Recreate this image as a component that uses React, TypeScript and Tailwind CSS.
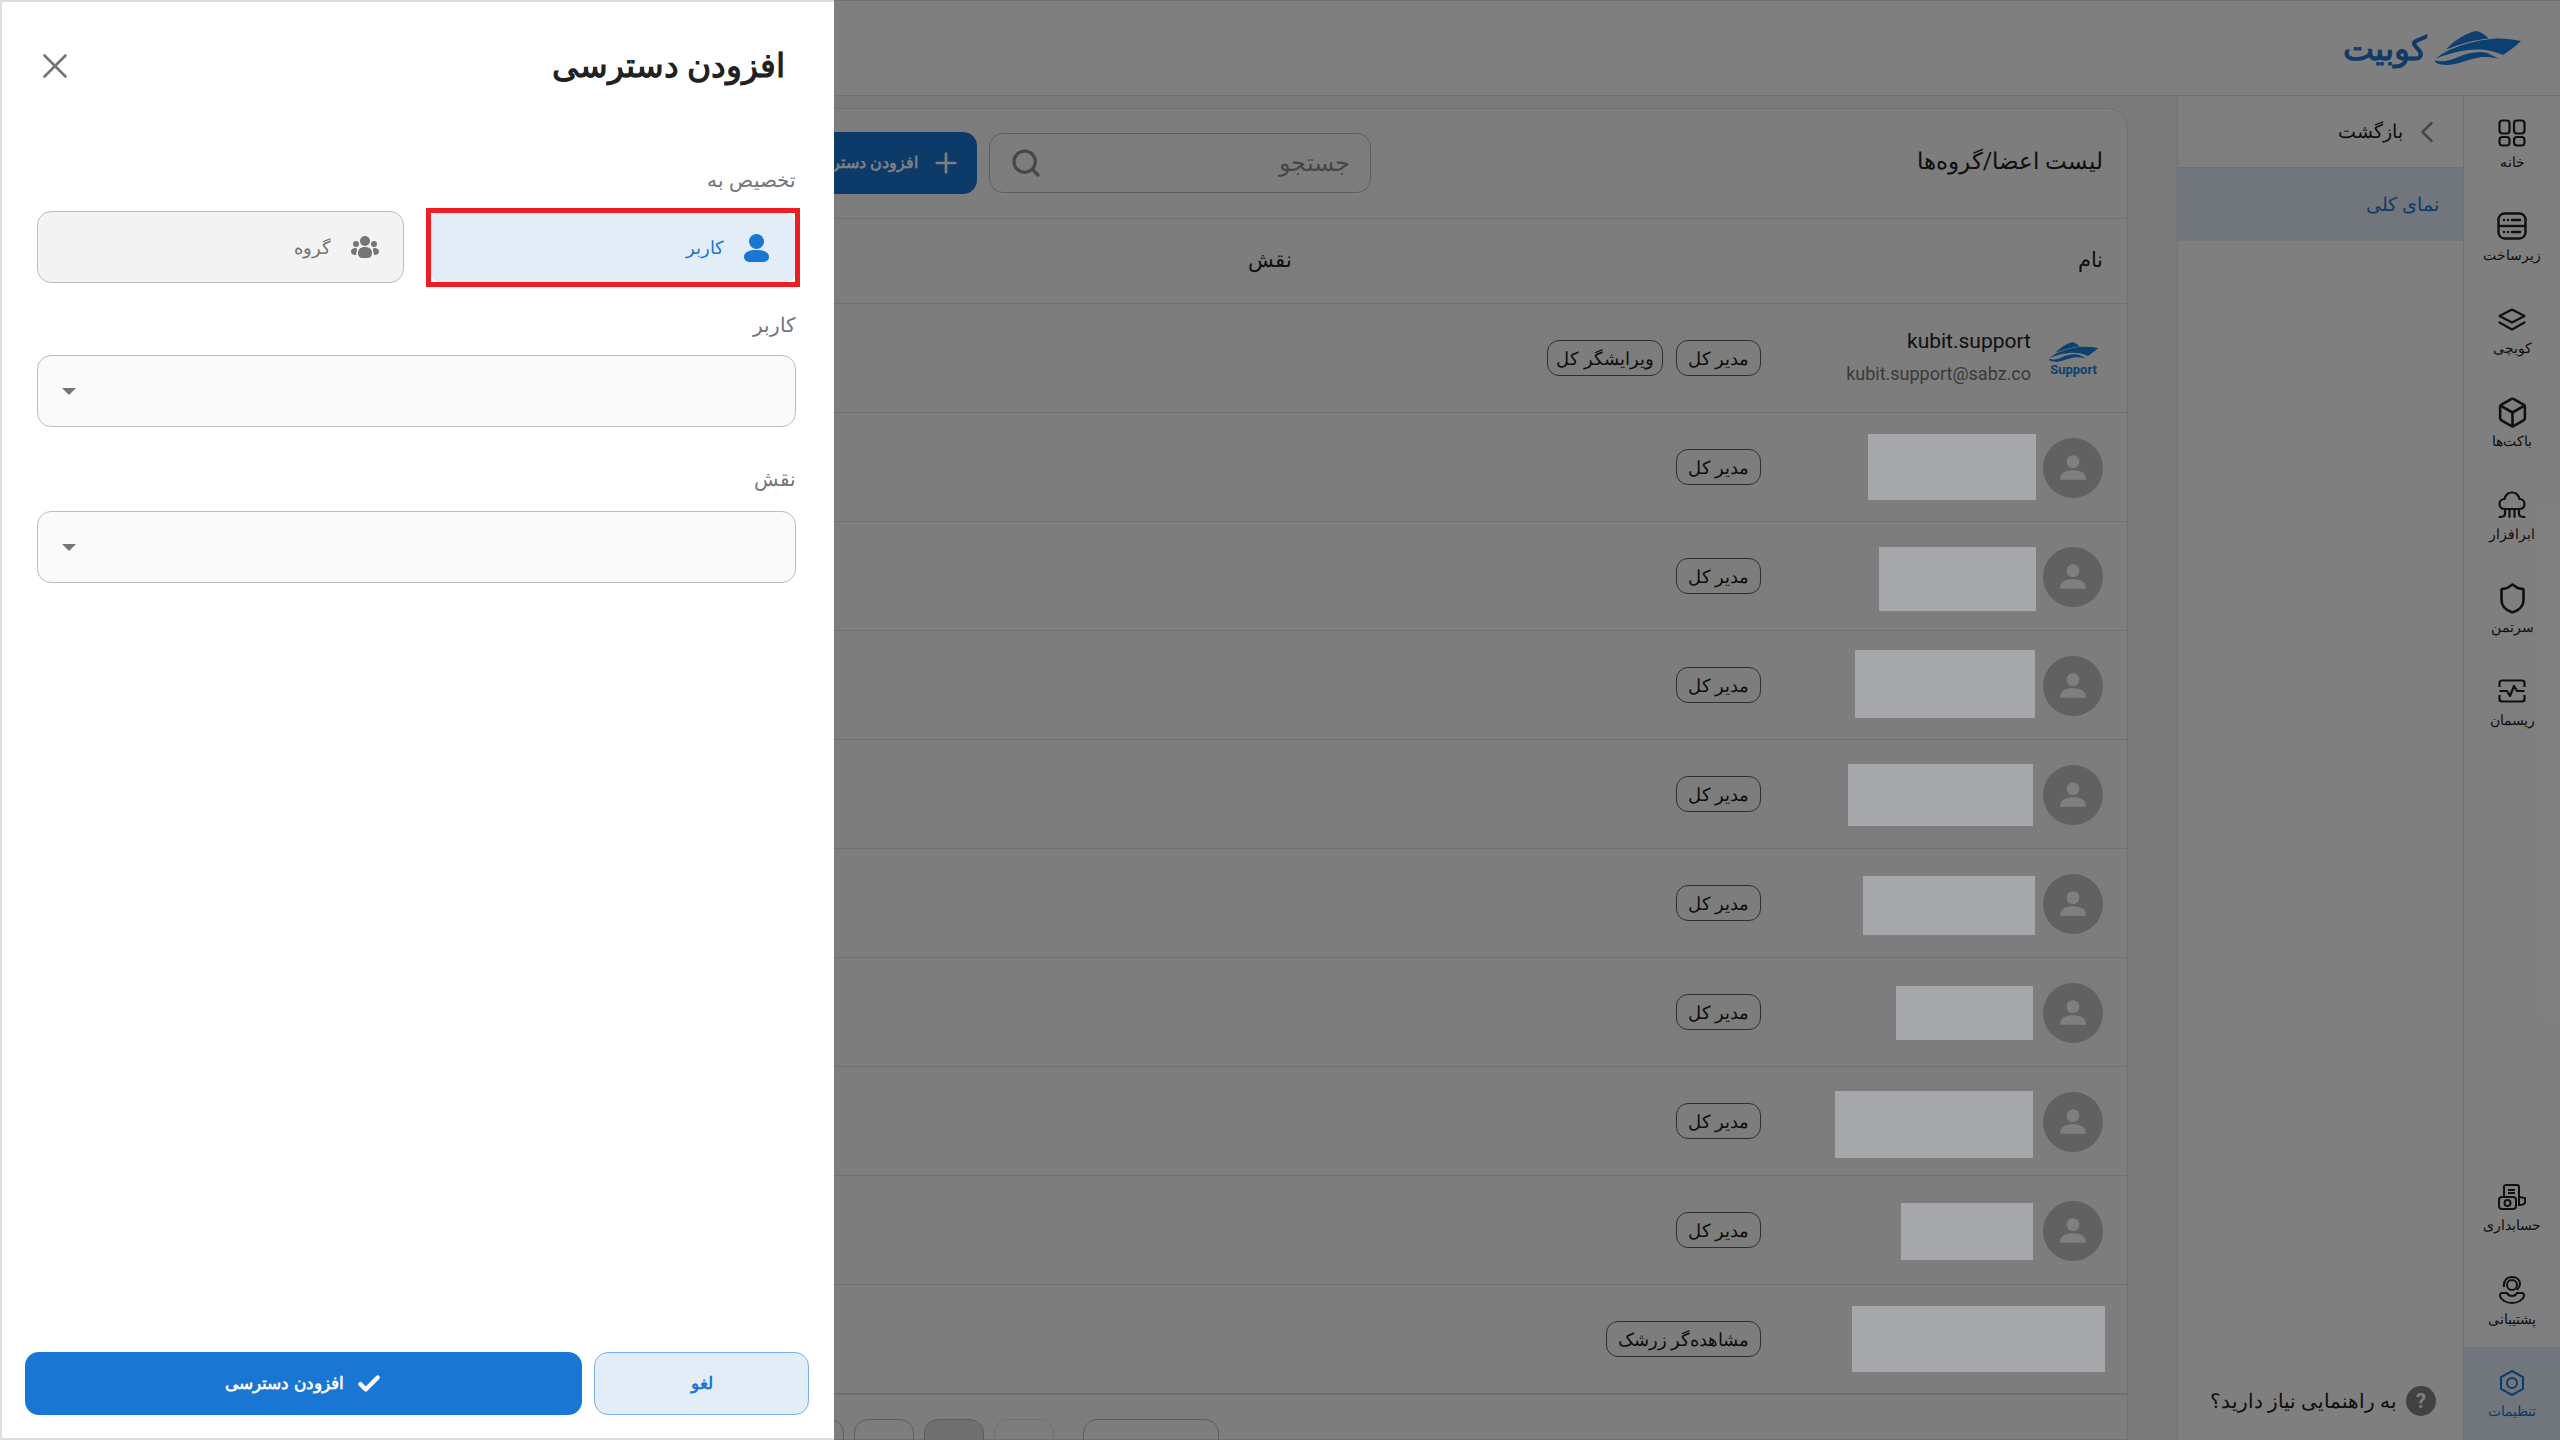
import React from "react";
import { Box, Shield, Search, Plus, ChevronLeft, X, Check } from "lucide-react";

const Boat = ({ className }: { className?: string }) => (
  <svg viewBox="0 0 86 34" className={className} fill="currentColor">
    <path d="M11 18.5 C18 11 24 7 28 5 C32 3 36 1 40 0 C45 0 49 3 54 7.5 C40 8.5 24 13.5 11 18.5 Z" />
    <path d="M1 27.5 C10 19.5 30 11 56 8 C66 7 76 8 86 10 C81 15 74 20 68 24 C60 20.5 52 18.5 42 18.5 C28 18.5 12 23 1 27.5 Z" />
    <path d="M0 29.5 C8 31 14 30 22 26.5 C32 22 44 19.5 52 22 C56 23.5 60 25.5 64 28 C56 26 50 25.5 44 26.5 C32 28.5 22 34 12 34 C6 34 2 33 0 31 Z" />
  </svg>
);

const railTop = [
  {
    label: "خانه",
    icon: (
      <svg viewBox="0 0 28 28" className="w-[28px] h-[28px]" fill="none" stroke="currentColor" strokeWidth="2.2">
        <rect x="1.5" y="1.5" width="10" height="13" rx="3" />
        <rect x="16" y="1.5" width="10.5" height="13" rx="3" />
        <rect x="1.5" y="18" width="10" height="8.5" rx="3" />
        <rect x="16" y="18" width="10.5" height="8.5" rx="3" />
      </svg>
    ),
  },
  {
    label: "زیرساخت",
    icon: (
      <svg viewBox="0 0 30 28" className="w-[30px] h-[28px]" fill="none" stroke="currentColor" strokeWidth="2.4">
        <rect x="1.5" y="1.5" width="27" height="25" rx="6" />
        <path d="M1.5 14h27" />
        <path d="M7 8h.1M11 8h.1M15 8h8M7 20h.1M11 20h.1M15 20h8" strokeLinecap="round" />
      </svg>
    ),
  },
  {
    label: "کوبچی",
    icon: (
      <svg viewBox="0 0 28 23" className="w-[28px] h-[23px]" fill="none" stroke="currentColor" strokeWidth="2.2" strokeLinejoin="round" strokeLinecap="round">
        <path d="M14 1.5 L26.5 8 L14 14.5 L1.5 8 Z" />
        <path d="M1.5 14.5 L14 21.5 L26.5 14.5" />
      </svg>
    ),
  },
  { label: "باکت‌ها", icon: <Box size={33} strokeWidth={1.9} /> },
  {
    label: "ابرافزار",
    icon: (
      <svg viewBox="0 0 28 28" className="w-[28px] h-[28px]" fill="none" stroke="currentColor" strokeWidth="2.2" strokeLinecap="round">
        <path d="M7 18 C3 18 1.5 15.5 1.5 13 C1.5 10 4 8 6.5 8 C7.5 4 10.5 1.5 14 1.5 C18 1.5 20.5 4 21.5 8 C24.5 8 26.5 10.5 26.5 13 C26.5 16 24.5 18 21 18 Z" />
        <path d="M7 18 V23 C7 25.5 5 26 1.5 26 M21 18 V23 C21 25.5 23 26 26.5 26 M11.5 18 V26 M16.5 18 V26" />
      </svg>
    ),
  },
  { label: "سرتمن", icon: <Shield size={33} strokeWidth={1.9} /> },
  {
    label: "ریسمان",
    icon: (
      <svg viewBox="0 0 28 24" className="w-[28px] h-[24px]" fill="none" stroke="currentColor" strokeWidth="2.2" strokeLinejoin="round">
        <path d="M1.5 8 V4 C1.5 2.5 2.5 1.5 4 1.5 H24 C25.5 1.5 26.5 2.5 26.5 4 V8" />
        <path d="M1.5 16 V20 C1.5 21.5 2.5 22.5 4 22.5 H24 C25.5 22.5 26.5 21.5 26.5 20 V16" />
        <path d="M1.5 12 H9 L12 17 L16 7 L19 12 H26.5" />
      </svg>
    ),
  },
];

const rows = [
  { w: 168, h: 66, o: -1, right: 7 },
  { w: 157, h: 64, o: 2, right: 7 },
  { w: 180, h: 68, o: -2, right: 8 },
  { w: 185, h: 62, o: 0, right: 10 },
  { w: 172, h: 59, o: 1, right: 8 },
  { w: 137, h: 54, o: 0, right: 10 },
  { w: 198, h: 67, o: 2, right: 10 },
  { w: 132, h: 57, o: 0, right: 10 },
];

const Chip = ({ children, className = "px-[11px]" }: { children: React.ReactNode; className?: string }) => (
  <span className={`h-[36px] flex items-center border border-[#5f5f5f] rounded-[12px] text-[18px] text-[#1a1a1a] whitespace-nowrap ${className}`}>
    {children}
  </span>
);

const Avatar = () => (
  <div className="w-[60px] h-[60px] rounded-full bg-[#c2c2c2] flex items-center justify-center shrink-0">
    <svg viewBox="0 0 30 30" className="w-[32px] h-[32px]" fill="#ffffff">
      <circle cx="15" cy="9" r="6" />
      <path d="M3 25 C3 19 9 17 15 17 C21 17 27 19 27 25 V26 H3 Z" />
    </svg>
  </div>
);

export default function App() {
  return (
    <div dir="rtl" className="relative h-screen w-full overflow-hidden bg-white flex flex-col text-[#212121] font-['Roboto','Noto_Sans',sans-serif]">
      <header className="h-[96px] shrink-0 border-b border-t border-t-[#dedede] border-b-[#e0e0e0] flex items-center pr-[39px] gap-[8px]">
        <Boat className="w-[86px] h-[34px] text-[#1b7fe0]" />
        <span className="text-[33px] font-bold text-[#1e76d0] leading-none">کوبیت</span>
      </header>
      <div className="flex-1 min-h-0 flex">
        <aside className="w-[97px] shrink-0 border-l border-[#e0e0e0] flex flex-col justify-between">
          <div className="flex flex-col pt-[2px]">
            {railTop.map((it) => (
              <div key={it.label} className="h-[93px] flex flex-col items-center justify-center gap-[5px] text-[#212121]">
                <div className="h-[30px] flex items-center">{it.icon}</div>
                <span className="text-[14px] leading-[18px]">{it.label}</span>
              </div>
            ))}
          </div>
          <div className="flex flex-col">
            <div className="h-[93px] pt-[3px] flex flex-col items-center justify-center gap-[6px]">
              <svg viewBox="0 0 28 26" className="w-[28px] h-[26px]" fill="none" stroke="currentColor" strokeWidth="2">
                <path d="M6 13 V3 C6 2 7 1 8 1 H19 C20 1 21 2 21 3 V22" />
                <path d="M10 6h7M10 9h7M21 13 L27 14 V18 C27 20 25 21 21 21" />
                <rect x="1" y="13" width="17" height="12" rx="3" />
                <circle cx="9.5" cy="19" r="3" />
              </svg>
              <span className="text-[14px] leading-[18px]">حسابداری</span>
            </div>
            <div className="h-[93px] pt-[3px] flex flex-col items-center justify-center gap-[6px]">
              <svg viewBox="0 0 26 28" className="w-[26px] h-[28px]" fill="none" stroke="currentColor" strokeWidth="2">
                <circle cx="13" cy="9" r="5" />
                <path d="M5 11 C4 5 8 1 13 1 C18 1 21 4 21 8 C21 10 20 12 18 14" />
                <path d="M8 17 H3 C1 17 1 19 1 20 C2 24 7 27 13 27 C19 27 24 24 25 20 C25 19 25 17 23 17 H18 C17 19 15 20 13 20 C11 20 9 19 8 17 Z" />
              </svg>
              <span className="text-[14px] leading-[18px]">پشتیبانی</span>
            </div>
            <div className="h-[93px] pt-[3px] flex flex-col items-center justify-center gap-[6px] bg-[#e3edf8] text-[#1976d2]">
              <svg viewBox="0 0 24 26" className="w-[24px] h-[26px]" fill="none" stroke="currentColor" strokeWidth="2">
                <path d="M12 1 L23 7 V19 L12 25 L1 19 V7 Z" />
                <circle cx="12" cy="13" r="5" />
              </svg>
              <span className="text-[14px] leading-[18px]">تنظیمات</span>
            </div>
          </div>
        </aside>
        <nav className="w-[286px] shrink-0 border-l border-[#e0e0e0] flex flex-col">
          <div className="h-[72px] border-b border-[#e0e0e0] flex items-center pr-[18px] gap-[6px]">
            <ChevronLeft size={36} strokeWidth={1.7} className="text-[#8e8e8e]" />
            <span className="text-[19px] pt-[2px]">بازگشت</span>
          </div>
          <div className="h-[73px] bg-[#e3edf8] flex items-center pr-[24px] pt-[2px] text-[19px] text-[#1976d2]">نمای کلی</div>
          <div className="mt-auto h-[54px] flex items-start pr-[27px] gap-[9px]">
            <div className="w-[30px] h-[30px] rounded-full bg-[#848484] text-white font-bold text-[20px] flex items-center justify-center">?</div>
            <span className="text-[20px] leading-[30px]">به راهنمایی نیاز دارید؟</span>
          </div>
        </nav>
        <main className="flex-1 min-w-0 bg-[#f5f5f5] pt-[12px] pr-[49px] pl-[732px]">
          <section className="border border-[#e0e0e0] rounded-t-[20px] bg-[#fafafa] h-full flex flex-col">
            <div className="h-[110px] shrink-0 border-b border-[#e0e0e0] flex items-center justify-between pr-[24px] pb-[2px]">
              <h2 className="text-[23px]">لیست اعضا/گروه‌ها</h2>
              <div className="flex items-center gap-[12px]">
                <div className="w-[382px] h-[60px] border border-[#bdbdbd] rounded-[14px] flex items-center justify-between pr-[20px] pl-[20px]">
                  <span className="text-[24px] text-[#8e8e8e]">جستجو</span>
                  <Search size={32} strokeWidth={2.4} className="text-[#8e8e8e]" />
                </div>
                <div className="w-[244px] h-[62px] bg-[#1976d2] rounded-[14px] flex items-center pr-[15px] gap-[12px] text-white font-bold text-[16px]">
                  <Plus size={32} />
                  <span>افزودن دسترسی</span>
                </div>
              </div>
            </div>
            <div className="h-[85px] shrink-0 border-b border-[#e0e0e0] flex items-center pr-[24px] text-[21px]">
              <span className="w-[811px]">نام</span>
              <span>نقش</span>
            </div>
            <div className="h-[109px] shrink-0 border-b border-[#e0e0e0] flex items-center pt-[2px] pr-[29px]">
              <div className="w-[337px] flex items-center gap-[18px]">
                <div className="w-[49px] flex flex-col items-center text-[#1b7fe0]">
                  <Boat className="w-[49px] h-[22px]" />
                  <span className="text-[13px] leading-[14px] font-bold font-['Roboto',sans-serif]">Support</span>
                </div>
                <div dir="ltr" className="text-right font-['Roboto',sans-serif]">
                  <div className="text-[21px] leading-[30px] -mt-[5px]">kubit.support</div>
                  <div className="text-[18px] leading-[26px] mt-[5px] text-[#757575]">kubit.support@sabz.co</div>
                </div>
              </div>
              <div className="flex gap-[13px] -mt-[2px]">
                <Chip>مدیر کل</Chip>
                <Chip className="px-[8px]">ویرایشگر کل</Chip>
              </div>
            </div>
            {rows.map((r, i) => (
              <div key={i} className="h-[109px] shrink-0 border-b border-[#e0e0e0] flex items-center pt-[2px] pr-[24px]">
                <div className="w-[342px] flex items-center gap-[7px]">
                  <Avatar />
                  <div className="relative z-10 bg-[#a6a7ab]" style={{ width: r.w, height: r.h, marginTop: r.o * 2, marginRight: r.right - 7 }} />
                </div>
                <Chip className="px-[11px] -mt-[2px]">مدیر کل</Chip>
              </div>
            ))}
            <div className="h-[110px] shrink-0 border-b-2 border-[#dedede] flex items-center pr-[22px]">
              <div className="w-[344px]">
                <div className="relative z-10 w-[253px] h-[66px] bg-[#a6a7ab]" />
              </div>
              <Chip>مشاهده‌گر زرشک</Chip>
            </div>
            <div className="flex pt-[24px] pr-[908px] gap-[29px]">
              <div className="w-[136px] h-[60px] shrink-0 border border-[#bdbdbd] rounded-[14px]" />
              <div className="flex gap-[10px]">
                <div className="w-[60px] h-[60px] shrink-0 border border-[#e0e0e0] rounded-[14px]" />
                <div className="w-[60px] h-[60px] shrink-0 border border-[#bdbdbd] rounded-[14px] bg-[#e0e0e0]" />
                <div className="w-[60px] h-[60px] shrink-0 border border-[#bdbdbd] rounded-[14px]" />
                <div className="w-[60px] h-[60px] shrink-0 border border-[#bdbdbd] rounded-[14px]" />
              </div>
            </div>
          </section>
        </main>
      </div>
      <div className="absolute inset-0 bg-black/50" />
      <div className="absolute z-20 left-0 top-0 bottom-0 w-[834px] bg-white border-t-2 border-b-2 border-l-2 border-[#dedede] flex flex-col">
        <div className="h-[128px] shrink-0 flex items-center justify-between pr-[49px] pl-[32px]">
          <h1 className="text-[33px] font-bold text-[#212121]">افزودن دسترسی</h1>
          <X size={42} strokeWidth={1.5} className="text-[#757575]" />
        </div>
        <div className="pr-[38px] pl-[35px] flex flex-col">
          <label className="mt-[36px] h-[28px] text-[20px] leading-[28px] text-[#757575]">تخصیص به</label>
          <div className="mt-[14px] flex justify-between items-center">
            <div className="-mr-[4px] w-[374px] h-[79px] border-[5px] border-[#ee1c25]">
              <button className="w-full h-full rounded-[8px] bg-[#e3edf8] flex items-center pr-[26px] gap-[20px] text-[#1976d2] text-[18px]">
                <svg viewBox="0 0 25 28" className="w-[25px] h-[28px]" fill="currentColor">
                  <ellipse cx="12.5" cy="7.5" rx="7.5" ry="7.5" />
                  <path d="M0 23 C0 18 5 16 12.5 16 C20 16 25 18 25 23 C25 26.5 22 28 19 28 H6 C3 28 0 26.5 0 23 Z" />
                </svg>
                <span>کاربر</span>
              </button>
            </div>
            <button className="w-[367px] h-[72px] -mt-[1px] rounded-[14px] bg-[#f3f3f3] border border-[#bdbdbd] flex items-center pr-[24px] gap-[20px] text-[#757575] text-[18px]">
              <svg viewBox="0 0 28 22" className="w-[28px] h-[22px]" fill="currentColor">
                <circle cx="14" cy="5" r="5" />
                <circle cx="5" cy="8" r="3" />
                <circle cx="23" cy="8" r="3" />
                <path d="M7 17 C7 13 10 11 14 11 C18 11 21 13 21 17 C21 20 19 22 17 22 H11 C9 22 7 20 7 17 Z" />
                <path d="M0 16 C0 13 2 12 5 12 C6 12 6 13 6 14 L5 19 C2 19 0 18 0 16 Z M28 16 C28 13 26 12 23 12 C22 12 22 13 22 14 L23 19 C26 19 28 18 28 16 Z" />
              </svg>
              <span>گروه</span>
            </button>
          </div>
          <label className="mt-[24px] h-[28px] text-[20px] leading-[28px] text-[#757575]">کاربر</label>
          <div className="mt-[16px] h-[72px] rounded-[14px] bg-[#fafafa] border border-[#bdbdbd] flex items-center justify-end pl-[24px]">
            <svg viewBox="0 0 14 7" className="w-[14px] h-[7px]" fill="#757575"><path d="M0 0H14L7 7Z" /></svg>
          </div>
          <label className="mt-[38px] h-[28px] text-[20px] leading-[28px] text-[#757575]">نقش</label>
          <div className="mt-[18px] h-[72px] rounded-[14px] bg-[#fafafa] border border-[#bdbdbd] flex items-center justify-end pl-[24px]">
            <svg viewBox="0 0 14 7" className="w-[14px] h-[7px]" fill="#757575"><path d="M0 0H14L7 7Z" /></svg>
          </div>
        </div>
        <div className="mt-auto pr-[25px] pl-[23px] pb-[23px] flex gap-[12px]">
          <button className="w-[215px] h-[63px] rounded-[14px] bg-[#e3edf8] border border-[#76aeea] text-[#1976d2] font-bold text-[17px]">لغو</button>
          <button className="flex-1 h-[63px] rounded-[14px] bg-[#1976d2] text-white font-bold text-[17px] flex items-center justify-center gap-[12px]">
            <Check size={26} strokeWidth={4} />
            <span>افزودن دسترسی</span>
          </button>
        </div>
      </div>
    </div>
  );
}
